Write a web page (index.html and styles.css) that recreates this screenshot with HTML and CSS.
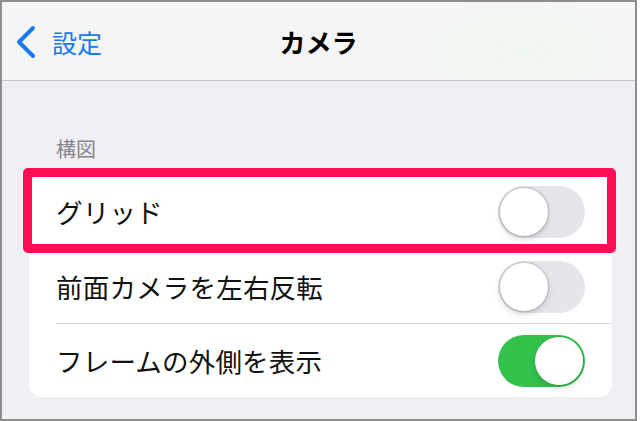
FILE: index.html
```html
<!DOCTYPE html>
<html lang="ja">
<head>
<meta charset="utf-8">
<title>カメラ</title>
<link rel="stylesheet" href="styles.css">
</head>
<body>
<div class="frame">
  <header class="nav">
    <div class="back">
      <svg class="chev" width="24" height="34" viewBox="0 0 24 34" aria-hidden="true">
        <path d="M18 3 L4 17 L18 31" fill="none" stroke="#1a7af6" stroke-width="4" stroke-linecap="round" stroke-linejoin="round"/>
      </svg>
      <span class="back-label">設定</span>
    </div>
    <h1 class="title">カメラ</h1>
    <div class="spacer"></div>
  </header>
  <main class="content">
    <div class="section-header">構図</div>
    <div class="card">
      <div class="row highlighted">
        <span class="label">グリッド</span>
        <span class="toggle"><span class="knob"></span></span>
        <span class="mark"></span>
      </div>
      <div class="row">
        <span class="label">前面カメラを左右反転</span>
        <span class="toggle"><span class="knob"></span></span>
      </div>
      <div class="row">
        <span class="label">フレームの外側を表示</span>
        <span class="toggle on"><span class="knob"></span></span>
      </div>
    </div>
  </main>
</div>
</body>
</html>
```
FILE: styles.css
```css
* { box-sizing: border-box; }
html, body { margin: 0; padding: 0; background: #ffffff; }
body {
  font-family: "Noto Sans CJK JP", "Noto Sans", sans-serif;
  width: 640px;
  height: 421px;
  overflow: hidden;
}
.frame {
  width: 637px;
  height: 421px;
  border: 2px solid #8e8e8e;
  background: #efeff4;
  overflow: hidden;
}
.nav {
  height: 79px;
  border-bottom: 1px solid #c4c4c6;
  background: radial-gradient(ellipse 130px 70px at 520px 50px, #eef7ee 0%, #f5f5f5 100%);
  background-color: #f5f5f5;
  display: grid;
  grid-template-columns: 1fr auto 1fr;
  align-items: center;
}
.back {
  display: flex;
  align-items: center;
  padding-left: 13px;
  padding-top: 2px;
  color: #1a7af6;
}
.chev { display: block; }
.back-label {
  font-size: 25px;
  line-height: 30px;
  margin-left: 13px;
}
.title {
  margin: 0;
  font-size: 26px;
  line-height: 30px;
  font-weight: 700;
  color: #000;
  padding-top: 2px;
}
.content {
  padding-top: 57px;
}
.section-header {
  font-size: 20px;
  line-height: 22px;
  color: #85858b;
  padding-left: 54px;
  height: 37px;
}
.card {
  margin-left: 27px;
  margin-right: 23px;
  background: #ffffff;
  border-radius: 13px;
}
.row {
  position: relative;
  height: 74px;
  margin-left: 27px;
  padding-right: 27px;
  display: flex;
  align-items: center;
  justify-content: space-between;
}
.row + .row { border-top: 1px solid #dcdce0; }
.label {
  font-size: 26.5px;
  line-height: 32px;
  color: #111;
  letter-spacing: 0.2px;
}
.toggle {
  width: 87px;
  height: 52px;
  border-radius: 26px;
  background: #e6e6ea;
  padding: 2px;
  display: flex;
  justify-content: flex-start;
}
.toggle.on {
  background: #33c24c;
  justify-content: flex-end;
}
.knob {
  width: 48px;
  height: 48px;
  border-radius: 50%;
  background: #ffffff;
  box-shadow: 0 0 0 1.5px rgba(0,0,0,0.1), 0 3px 7px rgba(0,0,0,0.16);
}
.toggle.on .knob {
  box-shadow: 0 0 0 1px rgba(0,0,0,0.04), 0 3px 7px rgba(0,0,0,0.14);
}
.mark {
  position: absolute;
  z-index: 2;
  left: -33px;
  right: -4px;
  top: -7px;
  bottom: -4px;
  border: 9px solid #fe0e56;
  border-radius: 5px;
  pointer-events: none;
}
```
